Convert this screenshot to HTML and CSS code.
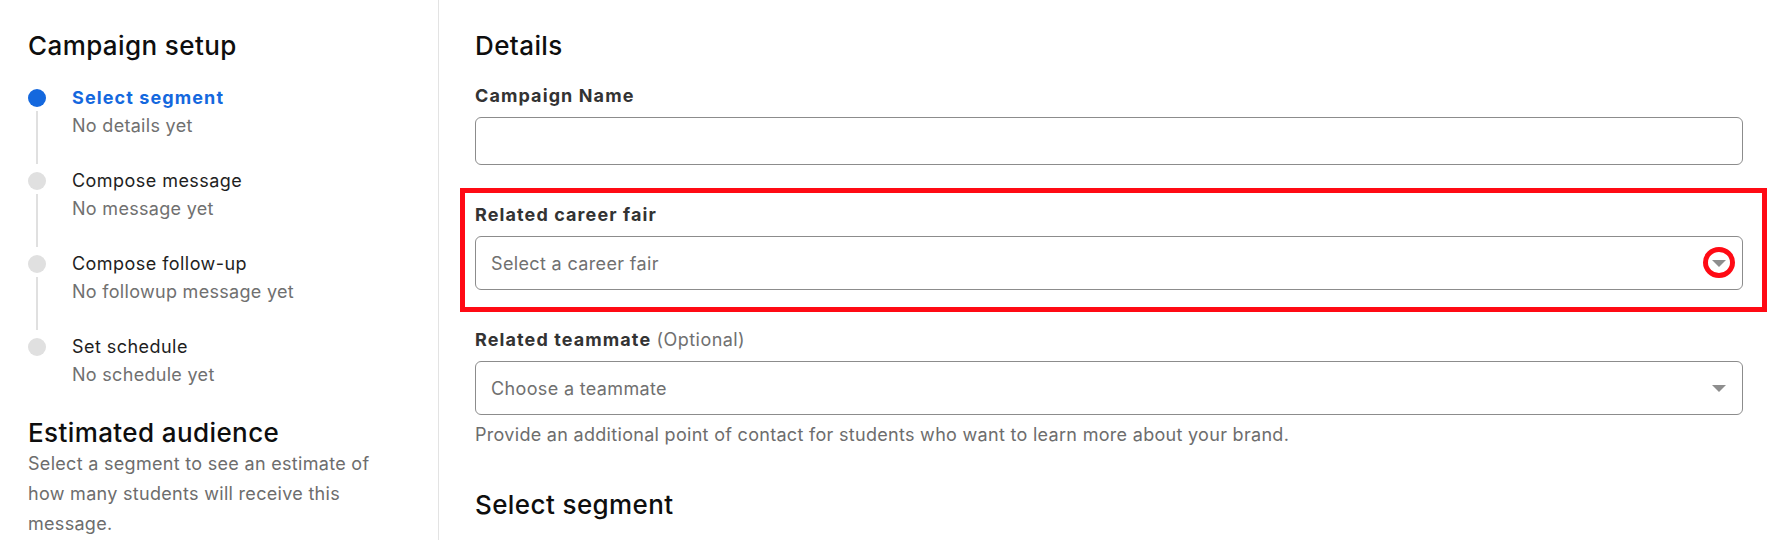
FILE: index.html
```html
<!DOCTYPE html>
<html lang="en">
<head>
<meta charset="utf-8">
<title>Campaign setup</title>
<link rel="stylesheet" href="styles.css">
</head>
<body>
<div class="layout">
  <aside class="sidebar">
    <h2 class="heading">Campaign setup</h2>
    <ol class="steps">
      <li class="step active">
        <span class="dot"></span>
        <div class="step-text">
          <div class="step-title">Select segment</div>
          <div class="step-sub">No details yet</div>
        </div>
      </li>
      <li class="step">
        <span class="dot"></span>
        <div class="step-text">
          <div class="step-title">Compose message</div>
          <div class="step-sub">No message yet</div>
        </div>
      </li>
      <li class="step">
        <span class="dot"></span>
        <div class="step-text">
          <div class="step-title">Compose follow-up</div>
          <div class="step-sub">No followup message yet</div>
        </div>
      </li>
      <li class="step last">
        <span class="dot"></span>
        <div class="step-text">
          <div class="step-title">Set schedule</div>
          <div class="step-sub">No schedule yet</div>
        </div>
      </li>
    </ol>
    <h2 class="heading audience">Estimated audience</h2>
    <p class="audience-desc">Select a segment to see an estimate of how many students will receive this message.</p>
  </aside>
  <main class="main">
    <h2 class="heading">Details</h2>
    <div class="field">
      <label class="label">Campaign Name</label>
      <div class="input"></div>
    </div>
    <div class="field highlighted">
      <label class="label">Related career fair</label>
      <div class="select">
        <span class="placeholder">Select a career fair</span>
        <span class="caret-wrap"><span class="caret"></span><span class="ring"></span></span>
      </div>
      <span class="annot-box"></span>
    </div>
    <div class="field">
      <label class="label">Related teammate <span class="optional">(Optional)</span></label>
      <div class="select">
        <span class="placeholder">Choose a teammate</span>
        <span class="caret-wrap"><span class="caret"></span></span>
      </div>
      <p class="help">Provide an additional point of contact for students who want to learn more about your brand.</p>
    </div>
    <h2 class="heading segment">Select segment</h2>
  </main>
</div>
</body>
</html>
```

FILE: styles.css
```css
* { box-sizing: border-box; }
html, body { margin: 0; padding: 0; background: #fff; }
body {
  font-family: Inter, "Noto Sans", "Liberation Sans", sans-serif;
  color: #222;
  height: 540px;
  overflow: hidden;
}
.layout {
  display: flex;
  height: 540px;
}
.sidebar {
  width: 439px;
  flex: none;
  border-right: 1px solid #e3e3e3;
  padding: 30px 28px 0 28px;
}
.heading {
  margin: 0;
  font-size: 26px;
  line-height: 32px;
  font-weight: 500;
  color: #0e0e0e;
  letter-spacing: 0.4px;
}
.steps {
  list-style: none;
  margin: 22px 0 0 0;
  padding: 0;
}
.step {
  position: relative;
  display: flex;
  padding-bottom: 27px;
}
.step.last { padding-bottom: 0; }
.dot {
  flex: none;
  width: 18px;
  height: 18px;
  border-radius: 50%;
  background: #e0e0e0;
  margin-top: 5px;
  margin-right: 26px;
}
.step.active .dot { background: #1468de; }
.step::after {
  content: "";
  position: absolute;
  left: 8px;
  top: 27px;
  bottom: 3px;
  width: 2px;
  background: #e0e0e0;
}
.step.last::after { display: none; }
.step-title {
  font-size: 18px;
  line-height: 28px;
  color: #1e1e1e;
  letter-spacing: 0.45px;
}
.step.active .step-title {
  color: #1468de;
  font-weight: 700;
  letter-spacing: 1.1px;
}
.step-sub {
  font-size: 18px;
  line-height: 28px;
  color: #707070;
  letter-spacing: 0.3px;
}
.heading.audience { margin-top: 28px; }
.audience-desc {
  margin: 0;
  max-width: 380px;
  font-size: 18px;
  line-height: 30px;
  color: #6d6d6d;
  letter-spacing: 0.3px;
}
.main {
  flex: 1;
  padding: 30px 29px 0 36px;
}
.field {
  position: relative;
  display: flex;
  flex-direction: column;
}
.heading + .field { margin-top: 22px; }
.field + .field { margin-top: 38px; }
.label {
  display: block;
  font-size: 18px;
  line-height: 24px;
  font-weight: 700;
  color: #333;
  letter-spacing: 1.1px;
  margin-bottom: 9px;
}
.optional {
  font-weight: 400;
  color: #707070;
  letter-spacing: 0.45px;
}
.input {
  height: 48px;
  border: 1px solid #8c8c8c;
  border-radius: 6px;
}
.select {
  height: 54px;
  border: 1px solid #8c8c8c;
  border-radius: 6px;
  display: flex;
  align-items: center;
  justify-content: space-between;
  padding: 0 16px 0 15px;
}
.placeholder {
  font-size: 18px;
  color: #707070;
  letter-spacing: 0.35px;
}
.caret-wrap {
  position: relative;
  width: 14px;
  height: 14px;
  display: flex;
  align-items: center;
  justify-content: center;
}
.caret {
  width: 0;
  height: 0;
  border-left: 7px solid transparent;
  border-right: 7px solid transparent;
  border-top: 7px solid #8e8e8e;
  margin-top: 1px;
}
.ring {
  position: absolute;
  left: 50%;
  top: 50%;
  width: 32px;
  height: 31px;
  margin-left: -16px;
  margin-top: -16px;
  border: 5px solid #ff0a14;
  border-radius: 50%;
}
.annot-box {
  position: absolute;
  left: -15px;
  top: -15px;
  right: -24px;
  bottom: -22px;
  border: 5px solid #ff0a14;
  pointer-events: none;
}
.help {
  margin: 8px 0 0 0;
  font-size: 18px;
  line-height: 24px;
  color: #6d6d6d;
  letter-spacing: 0.3px;
}
.heading.segment { margin-top: 42px; }
```
